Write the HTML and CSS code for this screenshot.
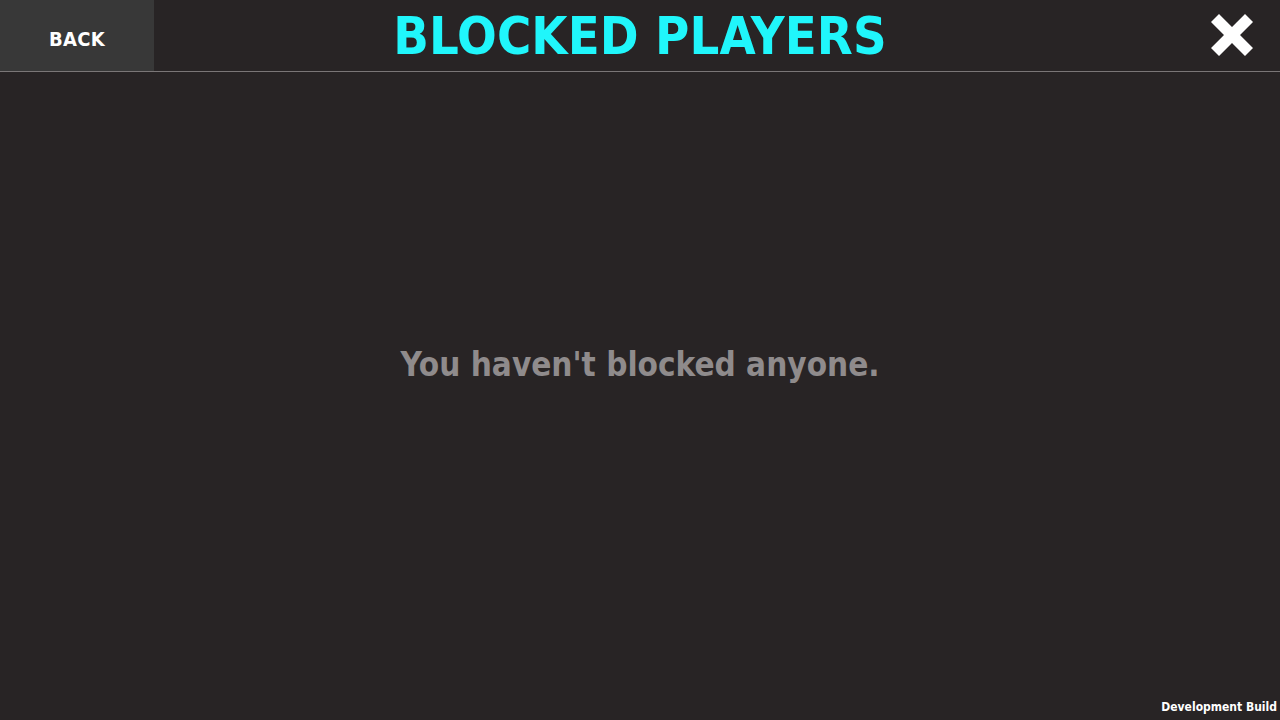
FILE: index.html
```html
<!DOCTYPE html>
<html>
<head>
<meta charset="utf-8">
<link rel="stylesheet" href="styles.css">
</head>
<body>
<div class="page">
  <header class="topbar">
    <div class="back">BACK</div>
    <h1 class="title">BLOCKED PLAYERS</h1>
    <div class="close">
      <svg width="44" height="44" viewBox="0 0 44 44">
        <path d="M9 1 L22 14 L35 1 L43 9 L30 22 L43 35 L35 43 L22 30 L9 43 L1 35 L14 22 L1 9 Z" fill="#ffffff"/>
      </svg>
    </div>
  </header>
  <main class="content">
    <p class="empty">You haven't blocked anyone.</p>
  </main>
  <footer class="footer">Development Build</footer>
</div>
</body>
</html>
```
FILE: styles.css
```css
html, body {
  margin: 0;
  padding: 0;
  background: #282425;
}
.page {
  width: 1280px;
  height: 720px;
  display: flex;
  flex-direction: column;
  font-family: "DejaVu Sans Condensed", "DejaVu Sans", sans-serif;
  overflow: hidden;
}
.topbar {
  height: 71px;
  border-bottom: 1px solid #7a7677;
  display: flex;
  align-items: stretch;
  flex-shrink: 0;
}
.back {
  width: 154px;
  flex-shrink: 0;
  background: #383838;
  color: #ffffff;
  font-weight: bold;
  font-size: 20px;
  display: flex;
  align-items: center;
  justify-content: center;
  padding-top: 6px;
  box-sizing: border-box;
  letter-spacing: 0.3px;
}
.title {
  flex: 1;
  margin: 0;
  color: #20f6fb;
  font-size: 52px;
  font-weight: bold;
  display: flex;
  align-items: center;
  justify-content: center;
  padding-right: 54px;
  letter-spacing: 0.1px;
}
.close {
  width: 100px;
  flex-shrink: 0;
  box-sizing: border-box;
  display: flex;
  align-items: center;
  justify-content: center;
  padding-left: 3px;
  padding-bottom: 2px;
}
.content {
  flex: 1;
  display: flex;
  align-items: center;
  justify-content: center;
}
.empty {
  margin: 0 0 44px 0;
  color: #8f8b8c;
  font-size: 33px;
  font-weight: bold;
  letter-spacing: 0;
}
.footer {
  height: 20px;
  color: #ffffff;
  font-size: 12px;
  font-weight: bold;
  text-align: right;
  padding-right: 3px;
  flex-shrink: 0;
}
```
